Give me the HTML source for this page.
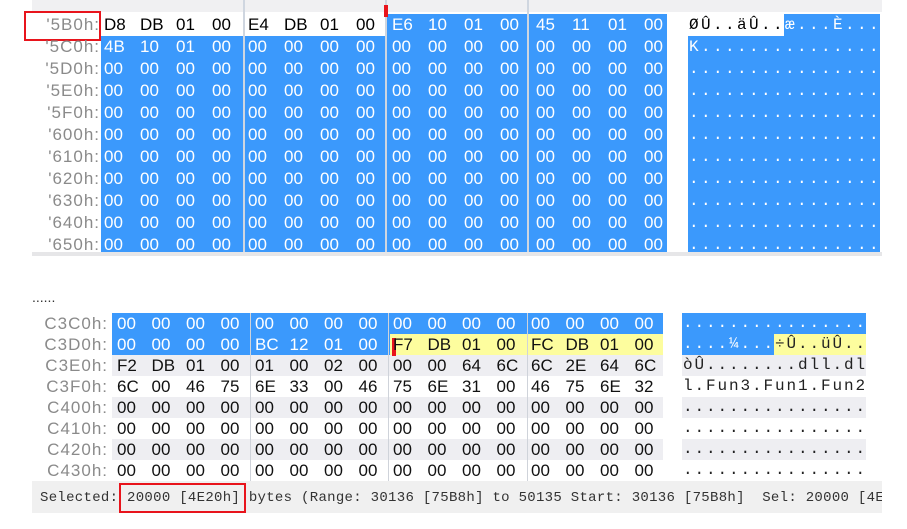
<!DOCTYPE html>
<html><head><meta charset="utf-8"><style>
body{margin:0;width:907px;height:529px;background:#fff;position:relative;overflow:hidden;font-family:"Liberation Sans","DejaVu Sans",sans-serif}
.a{position:absolute}
.lab{position:absolute;color:#8a8a8a;font-size:17px;text-align:right;letter-spacing:1px}
.hx{position:absolute;font-size:17px;white-space:nowrap}
.hx span{display:inline-block;text-align:left}
.t span{width:36px}
.b span{width:34.5px}
.asc{position:absolute;font-family:"Liberation Mono",monospace;font-size:15px;white-space:pre}
.w{color:#fff}
</style></head><body>
<!-- top section -->
<div class="a" style="left:32px;top:0;width:850px;height:12px;background:#f0f0f2"></div>
<div class="a" style="left:101px;top:36px;width:566px;height:216px;background:#3b99fc"></div>
<div class="a" style="left:386px;top:14px;width:281px;height:22px;background:#3b99fc"></div>
<div class="a" style="left:688px;top:14px;width:192px;height:238px;background:#3b99fc"></div>
<div class="a" style="left:688px;top:14px;width:96px;height:22px;background:#fff"></div>
<div class="a" style="left:32px;top:252px;width:850px;height:4px;background:#e6e6e8"></div>
<div class="a" style="left:243px;top:0;width:2px;height:252px;background:#cfd6e0"></div>
<div class="a" style="left:385px;top:0;width:2px;height:252px;background:#cfd6e0"></div>
<div class="a" style="left:527px;top:0;width:2px;height:252px;background:#cfd6e0"></div>
<div class="a" style="left:384px;top:5px;width:4px;height:12px;background:#e8141c"></div>
<div class="a" style="left:24px;top:11px;width:77px;height:30px;border:2px solid #e8141c;box-sizing:border-box"></div>

<div class="lab" style="left:20px;width:80px;top:14px;line-height:22px">'5B0h:<br>'5C0h:<br>'5D0h:<br>'5E0h:<br>'5F0h:<br>'600h:<br>'610h:<br>'620h:<br>'630h:<br>'640h:<br>'650h:</div>
<div class="hx t" style="left:104px;top:14px;line-height:22px">
<div><span>D8</span><span>DB</span><span>01</span><span>00</span><span>E4</span><span>DB</span><span>01</span><span>00</span><span class="w">E6</span><span class="w">10</span><span class="w">01</span><span class="w">00</span><span class="w">45</span><span class="w">11</span><span class="w">01</span><span class="w">00</span></div>
<div class="w"><span>4B</span><span>10</span><span>01</span><span>00</span><span>00</span><span>00</span><span>00</span><span>00</span><span>00</span><span>00</span><span>00</span><span>00</span><span>00</span><span>00</span><span>00</span><span>00</span></div>
<div class="w"><span>00</span><span>00</span><span>00</span><span>00</span><span>00</span><span>00</span><span>00</span><span>00</span><span>00</span><span>00</span><span>00</span><span>00</span><span>00</span><span>00</span><span>00</span><span>00</span></div>
<div class="w"><span>00</span><span>00</span><span>00</span><span>00</span><span>00</span><span>00</span><span>00</span><span>00</span><span>00</span><span>00</span><span>00</span><span>00</span><span>00</span><span>00</span><span>00</span><span>00</span></div>
<div class="w"><span>00</span><span>00</span><span>00</span><span>00</span><span>00</span><span>00</span><span>00</span><span>00</span><span>00</span><span>00</span><span>00</span><span>00</span><span>00</span><span>00</span><span>00</span><span>00</span></div>
<div class="w"><span>00</span><span>00</span><span>00</span><span>00</span><span>00</span><span>00</span><span>00</span><span>00</span><span>00</span><span>00</span><span>00</span><span>00</span><span>00</span><span>00</span><span>00</span><span>00</span></div>
<div class="w"><span>00</span><span>00</span><span>00</span><span>00</span><span>00</span><span>00</span><span>00</span><span>00</span><span>00</span><span>00</span><span>00</span><span>00</span><span>00</span><span>00</span><span>00</span><span>00</span></div>
<div class="w"><span>00</span><span>00</span><span>00</span><span>00</span><span>00</span><span>00</span><span>00</span><span>00</span><span>00</span><span>00</span><span>00</span><span>00</span><span>00</span><span>00</span><span>00</span><span>00</span></div>
<div class="w"><span>00</span><span>00</span><span>00</span><span>00</span><span>00</span><span>00</span><span>00</span><span>00</span><span>00</span><span>00</span><span>00</span><span>00</span><span>00</span><span>00</span><span>00</span><span>00</span></div>
<div class="w"><span>00</span><span>00</span><span>00</span><span>00</span><span>00</span><span>00</span><span>00</span><span>00</span><span>00</span><span>00</span><span>00</span><span>00</span><span>00</span><span>00</span><span>00</span><span>00</span></div>
<div class="w"><span>00</span><span>00</span><span>00</span><span>00</span><span>00</span><span>00</span><span>00</span><span>00</span><span>00</span><span>00</span><span>00</span><span>00</span><span>00</span><span>00</span><span>00</span><span>00</span></div>
</div>
<div class="asc" style="left:689px;top:14px;line-height:22px;font-size:16px;letter-spacing:2.4px"><span>ØÛ..äÛ..</span><span class="w">æ...È...</span>
<span class="w">K...............
................
................
................
................
................
................
................
................
................</span></div>

<div class="a" style="left:32px;top:289px;font-size:14px;color:#333">......</div>

<!-- bottom section -->
<div class="a" style="left:112px;top:313px;width:551px;height:21px;background:#3b99fc"></div>
<div class="a" style="left:112px;top:334px;width:278px;height:21px;background:#3b99fc"></div>
<div class="a" style="left:390px;top:334px;width:273px;height:21px;background:#fdfd9e"></div>
<div class="a" style="left:682px;top:313px;width:184px;height:21px;background:#3b99fc"></div>
<div class="a" style="left:682px;top:334px;width:92px;height:21px;background:#3b99fc"></div>
<div class="a" style="left:774px;top:334px;width:92px;height:21px;background:#fdfd9e"></div>
<div class="a" style="left:112px;top:355px;width:551px;height:21px;background:#eeeef2"></div>
<div class="a" style="left:682px;top:355px;width:184px;height:21px;background:#eeeef2"></div>
<div class="a" style="left:112px;top:397px;width:551px;height:21px;background:#eeeef2"></div>
<div class="a" style="left:682px;top:397px;width:184px;height:21px;background:#eeeef2"></div>
<div class="a" style="left:112px;top:439px;width:551px;height:21px;background:#eeeef2"></div>
<div class="a" style="left:682px;top:439px;width:184px;height:21px;background:#eeeef2"></div>
<div class="a" style="left:250px;top:313px;width:1px;height:168px;background:#cfd3da"></div>
<div class="a" style="left:388px;top:313px;width:1px;height:168px;background:#cfd3da"></div>
<div class="a" style="left:527px;top:313px;width:1px;height:168px;background:#cfd3da"></div>
<div class="a" style="left:392px;top:338px;width:4px;height:18px;background:#e8141c"></div>

<div class="lab" style="left:26px;width:82px;top:313px;line-height:21px">C3C0h:<br>C3D0h:<br>C3E0h:<br>C3F0h:<br>C400h:<br>C410h:<br>C420h:<br>C430h:</div>
<div class="hx b" style="left:117px;top:313px;line-height:21px;color:#111">
<div class="w"><span>00</span><span>00</span><span>00</span><span>00</span><span>00</span><span>00</span><span>00</span><span>00</span><span>00</span><span>00</span><span>00</span><span>00</span><span>00</span><span>00</span><span>00</span><span>00</span></div>
<div><span class="w">00</span><span class="w">00</span><span class="w">00</span><span class="w">00</span><span class="w">BC</span><span class="w">12</span><span class="w">01</span><span class="w">00</span><span>F7</span><span>DB</span><span>01</span><span>00</span><span>FC</span><span>DB</span><span>01</span><span>00</span></div>
<div><span>F2</span><span>DB</span><span>01</span><span>00</span><span>01</span><span>00</span><span>02</span><span>00</span><span>00</span><span>00</span><span>64</span><span>6C</span><span>6C</span><span>2E</span><span>64</span><span>6C</span></div>
<div><span>6C</span><span>00</span><span>46</span><span>75</span><span>6E</span><span>33</span><span>00</span><span>46</span><span>75</span><span>6E</span><span>31</span><span>00</span><span>46</span><span>75</span><span>6E</span><span>32</span></div>
<div><span>00</span><span>00</span><span>00</span><span>00</span><span>00</span><span>00</span><span>00</span><span>00</span><span>00</span><span>00</span><span>00</span><span>00</span><span>00</span><span>00</span><span>00</span><span>00</span></div>
<div><span>00</span><span>00</span><span>00</span><span>00</span><span>00</span><span>00</span><span>00</span><span>00</span><span>00</span><span>00</span><span>00</span><span>00</span><span>00</span><span>00</span><span>00</span><span>00</span></div>
<div><span>00</span><span>00</span><span>00</span><span>00</span><span>00</span><span>00</span><span>00</span><span>00</span><span>00</span><span>00</span><span>00</span><span>00</span><span>00</span><span>00</span><span>00</span><span>00</span></div>
<div><span>00</span><span>00</span><span>00</span><span>00</span><span>00</span><span>00</span><span>00</span><span>00</span><span>00</span><span>00</span><span>00</span><span>00</span><span>00</span><span>00</span><span>00</span><span>00</span></div>
</div>
<div class="asc" style="left:683px;top:313px;line-height:21px;color:#222;font-size:16px;letter-spacing:1.9px"><span class="w">................</span>
<span class="w">....¼...</span>÷Û..üÛ..
òÛ........dll.dl
l.Fun3.Fun1.Fun2
................
................
................
................</div>

<!-- status bar -->
<div class="a" style="left:32px;top:481px;width:850px;height:32px;background:#f0f0f0"></div>
<div class="a" style="left:32px;top:481px;width:850px;height:32px;overflow:hidden"><div style="position:absolute;left:8px;top:9px;font-family:'Liberation Mono',monospace;font-size:14px;color:#333;white-space:pre;letter-spacing:0.3px">Selected: 20000 [4E20h] bytes (Range: 30136 [75B8h] to 50135 Start: 30136 [75B8h]  Sel: 20000 [4E20h]</div></div>
<div class="a" style="left:119px;top:483px;width:127px;height:30px;border:2px solid #e8141c;box-sizing:border-box"></div>
</body></html>
